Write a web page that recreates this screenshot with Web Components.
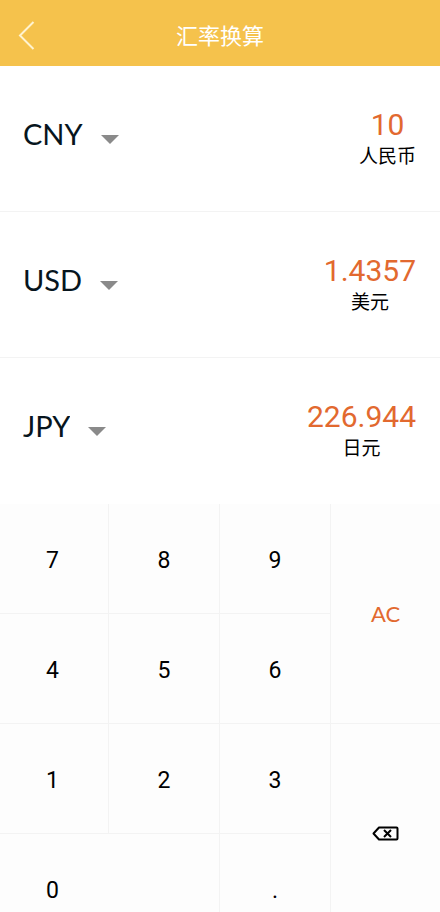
<!DOCTYPE html>
<html lang="zh-CN">
<head>
<meta charset="utf-8">
<meta name="viewport" content="width=device-width, initial-scale=1">
<title>汇率换算</title>
<style>
body { margin: 0; background: #fff; font-family: Roboto, "Noto Sans CJK SC", sans-serif; }
</style>
</head>
<body>
<currency-app></currency-app>
<script>
class AppHeader extends HTMLElement {
  constructor() {
    super();
    this.attachShadow({ mode: "open" }).innerHTML = `
      <style>
        :host { display: grid; grid-template-columns: 54px 1fr 54px; align-items: center; height: 66px; padding-top: 4px; box-sizing: border-box; background: #f5c24c; color: #fff; }
        button { display: flex; align-items: center; justify-content: center; height: 56px; border: 0; padding: 0; background: none; color: inherit; }
        h1 { margin: 0; padding-top: 4px; font-size: 22px; line-height: 32px; font-weight: 400; text-align: center; }
      </style>
      <button type="button" aria-label="返回"><svg width="18" height="30" viewBox="0 0 18 30" fill="none" stroke="#fff3d0" stroke-width="2"><path d="M15.500 2 2 15.500 15.500 29"/></svg></button>
      <h1><slot></slot></h1>`;
  }
}
customElements.define("app-header", AppHeader);

class CurrencyRow extends HTMLElement {
  connectedCallback() {
    const code = this.getAttribute("code");
    const options = ["CNY", "USD", "JPY"].map(c => `<option${c === code ? " selected" : ""}>${c}</option>`).join("");
    this.attachShadow({ mode: "open" }).innerHTML = `
      <style>
        :host { display: flex; justify-content: space-between; align-items: center; height: 146px; box-sizing: border-box; padding: 0 24px 0 23px; border-bottom: 1px solid #f3f3f3; }
        :host(:last-of-type) { border-bottom-color: transparent; }
        label { display: flex; align-items: center; gap: 18px; padding-bottom: 10px; }
        select { appearance: none; field-sizing: content; border: 0; margin: 0; padding: 0; background: none; color: #07151d; font: 29px/40px Lato, sans-serif; }
        svg { margin-top: 11px; pointer-events: none; }
        .amount { display: flex; flex-direction: column; align-items: center; }
        output { color: #e2692f; font-size: 30px; line-height: 36px; }
        .name { color: #000; font-size: 19px; line-height: 28px; }
      </style>
      <label><select aria-label="货币">${options}</select><svg width="18" height="9" viewBox="0 0 18 9"><path d="M0 0H18L9 9Z" fill="#8a8a8a"/></svg></label>
      <div class="amount"><output>${this.getAttribute("amount")}</output><span class="name"><slot></slot></span></div>`;
  }
}
customElements.define("currency-row", CurrencyRow);

class PadKey extends HTMLElement {
  constructor() {
    super();
    this.attachShadow({ mode: "open" }).innerHTML = `
      <style>
        :host { display: grid; }
        button { display: flex; align-items: center; justify-content: center; border: 0; border-right: 1px solid #f3f3f3; border-bottom: 1px solid #f3f3f3; padding: 4px 0 0; background: #fdfdfd; color: #000; font-family: inherit; font-size: 23px; line-height: 32px; }
        :host([first]) button { padding-right: 3px; }
        :host([zero]) button { padding-right: 114px; }
        :host([side]) button { border-right: 0; padding-top: 0; color: #e2692f; font-family: Lato, sans-serif; font-size: 22px; }
      </style>
      <button type="button"><slot></slot></button>`;
  }
  connectedCallback() {
    const name = this.getAttribute("name");
    if (name) this.shadowRoot.querySelector("button").setAttribute("aria-label", name);
  }
}
customElements.define("pad-key", PadKey);

class KeyPad extends HTMLElement {
  constructor() {
    super();
    this.attachShadow({ mode: "open" }).innerHTML = `
      <style>
        :host { display: grid; grid-template-columns: 109fr 111fr 111fr 109fr; grid-auto-rows: 110px; }
        .tall { grid-row: span 2; }
        .wide { grid-column: span 2; }
        svg { display: block; }
      </style>
      <pad-key first>7</pad-key><pad-key>8</pad-key><pad-key>9</pad-key><pad-key class="tall" side>AC</pad-key>
      <pad-key first>4</pad-key><pad-key>5</pad-key><pad-key>6</pad-key>
      <pad-key first>1</pad-key><pad-key>2</pad-key><pad-key>3</pad-key>
      <pad-key class="tall" side name="删除"><svg width="27" height="15" viewBox="0 0 27 15" fill="none" stroke="#000" stroke-width="2"><path d="M1.500 7.500 7 1.500H24.500Q25.500 1.500 25.500 2.500V12.500Q25.500 13.500 24.500 13.500H7Z" stroke-linejoin="round"/><path d="M12 4 19 11M19 4 12 11"/></svg></pad-key>
      <pad-key class="wide" zero>0</pad-key><pad-key>.</pad-key>`;
  }
}
customElements.define("key-pad", KeyPad);

class CurrencyApp extends HTMLElement {
  constructor() {
    super();
    this.attachShadow({ mode: "open" }).innerHTML = `
      <style>
        :host { display: flex; flex-direction: column; height: 100vh; overflow: hidden; }
        app-header, main, key-pad { flex-shrink: 0; }
      </style>
      <app-header>汇率换算</app-header>
      <main>
        <currency-row code="CNY" amount="10">人民币</currency-row>
        <currency-row code="USD" amount="1.4357">美元</currency-row>
        <currency-row code="JPY" amount="226.944">日元</currency-row>
      </main>
      <key-pad></key-pad>`;
  }
}
customElements.define("currency-app", CurrencyApp);
</script>
</body>
</html>
